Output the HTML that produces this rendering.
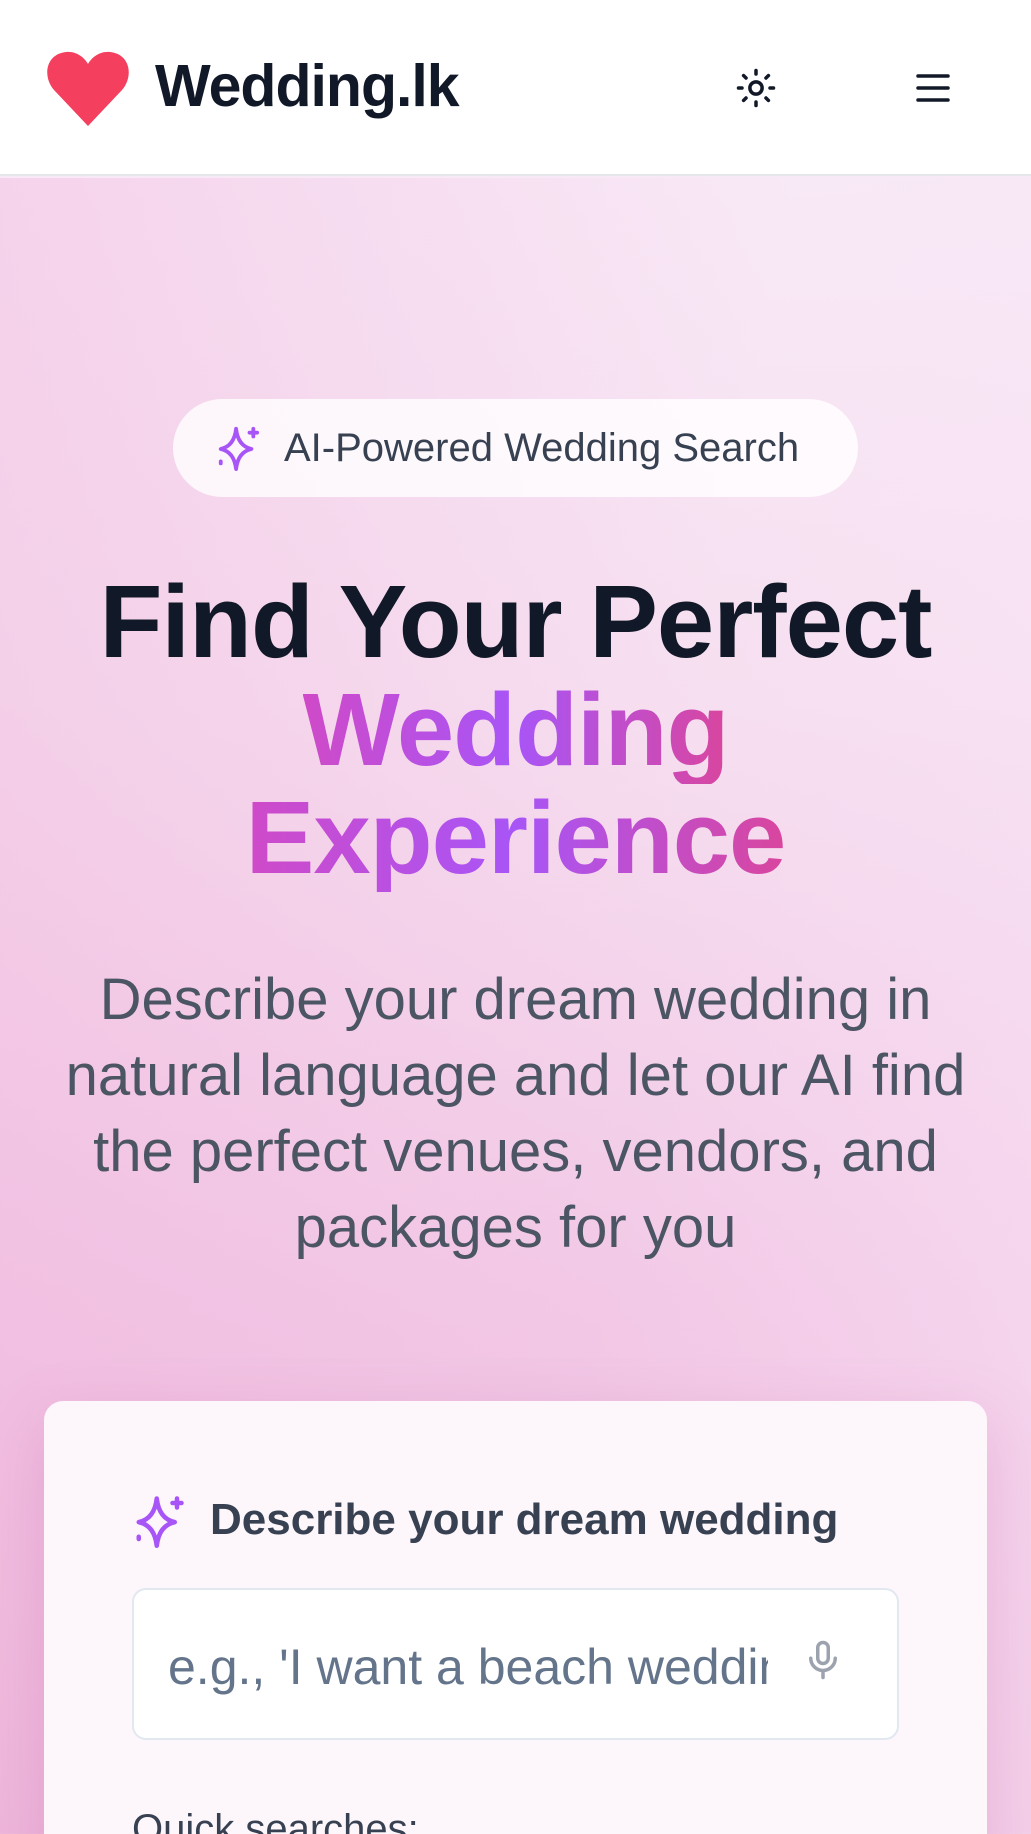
<!DOCTYPE html>
<html><head><meta charset="utf-8"><style>
*{margin:0;padding:0;box-sizing:border-box}
html,body{width:1031px;height:1834px;overflow:hidden}
body{font-family:"Liberation Sans",sans-serif;position:relative;
background:linear-gradient(180deg,#f8e9f6 176px,#f6dff0 700px,#f2c8e6 1300px,#eebadc 1834px);}
.hdr{position:absolute;left:0;top:0;width:1031px;height:176px;background:#fff;border-bottom:2px solid #e5e7eb}
.glow{position:absolute;left:0;top:178px;width:1031px;height:1656px;background:linear-gradient(100deg,rgba(240,170,215,0.35) 0%,rgba(255,255,255,0) 60%,rgba(250,230,248,0.5) 100%)}
.abs{position:absolute}
.logo{left:155px;top:52px;font-size:59px;font-weight:bold;color:#111827;letter-spacing:-1px}
.badge{left:173px;top:399px;width:685px;height:98px;border-radius:49px;background:rgba(255,255,255,0.8)}
.badge span{position:absolute;left:111px;top:27px;font-size:40px;color:#374151;white-space:nowrap}
.h1{left:0;width:1031px;text-align:center;font-weight:bold;font-size:103px;line-height:108px;color:#111827;letter-spacing:-1px;white-space:nowrap}
.g{display:inline-block;background:linear-gradient(90deg,#cf4ac8,#a855f7 50%,#d9469e);-webkit-background-clip:text;background-clip:text;color:transparent}
.p{left:0;width:1031px;text-align:center;font-size:58px;line-height:76px;color:#4b5563;white-space:nowrap}
.card{left:44px;top:1401px;width:943px;height:500px;border-radius:19px;background:#fdf6fb;box-shadow:0 20px 60px rgba(190,90,160,0.25)}
.input{left:132px;top:1588px;width:767px;height:152px;border:2px solid #e2e8f0;border-radius:14px;background:#fff}
</style></head><body>
<div class="hdr"></div>
<div class="glow"></div>
<svg class="abs" style="left:46px;top:50px" width="84" height="76" viewBox="0 0 84 76"><path d="M42 76 L8 40 C-4 26 0 4 20 2 C30 1 38 7 42 14 C46 7 54 1 64 2 C84 4 88 26 76 40 Z" fill="#f43f5e"/></svg>
<div class="abs logo">Wedding.lk</div>
<svg class="abs" style="left:735px;top:67px" width="42" height="42" viewBox="0 0 24 24" fill="none" stroke="#111827" stroke-width="2" stroke-linecap="round"><circle cx="12" cy="12" r="3.5"/><path d="M12 2v2M12 20v2M4.9 4.9l1.4 1.4M17.7 17.7l1.4 1.4M2 12h2M20 12h2M4.9 19.1l1.4-1.4M17.7 6.3l1.4-1.4"/></svg>
<svg class="abs" style="left:916px;top:72px" width="34" height="32" viewBox="0 0 34 32" stroke="#111827" stroke-width="3.5" stroke-linecap="round"><path d="M2 4h30M2 16h30M2 28h30"/></svg>
<div class="abs badge"><svg class="abs" style="left:42px;top:26px" width="46" height="46" viewBox="0 0 24 24" fill="none" stroke="#a855f7" stroke-width="2" stroke-linecap="round" stroke-linejoin="round"><path d="M11 2 Q12 11 19 12.5 Q12 14 11 23 Q10 14 3 12.5 Q10 11 11 2Z"/><path d="M20 2v4M18 4h4M3 19v1"/></svg><span>AI-Powered Wedding Search</span></div>
<div class="abs h1" style="top:568px">Find Your Perfect</div>
<div class="abs h1" style="top:676px"><span class="g">Wedding</span></div>
<div class="abs h1" style="top:784px"><span class="g">Experience</span></div>
<div class="abs p" style="top:962px">Describe your dream wedding in<br>natural language and let our AI find<br>the perfect venues, vendors, and<br>packages for you</div>
<div class="abs card"></div>
<svg class="abs" style="left:132px;top:1494px" width="54" height="54" viewBox="0 0 24 24" fill="none" stroke="#a855f7" stroke-width="2" stroke-linecap="round" stroke-linejoin="round"><path d="M11 2 Q12 11 19 12.5 Q12 14 11 23 Q10 14 3 12.5 Q10 11 11 2Z"/><path d="M20 2v4M18 4h4M3 19v1"/></svg>
<div class="abs" style="left:210px;top:1495px;font-size:44px;font-weight:bold;color:#374151;white-space:nowrap">Describe your dream wedding</div>
<div class="abs input"></div>
<div class="abs" style="left:168px;top:1638px;width:600px;overflow:hidden;font-size:50px;color:#64748b;white-space:nowrap">e.g., 'I want a beach wedding in Galle'</div>
<svg class="abs" style="left:802px;top:1636px" width="42" height="48" viewBox="0 0 24 24" fill="none" stroke="#9ca3af" stroke-width="2" stroke-linecap="round"><rect x="9" y="2" width="6" height="12" rx="3"/><path d="M5 11a7 7 0 0 0 14 0M12 18v4"/></svg>
<div class="abs" style="left:132px;top:1807px;font-size:40px;color:#374151;white-space:nowrap">Quick searches:</div>
</body></html>
